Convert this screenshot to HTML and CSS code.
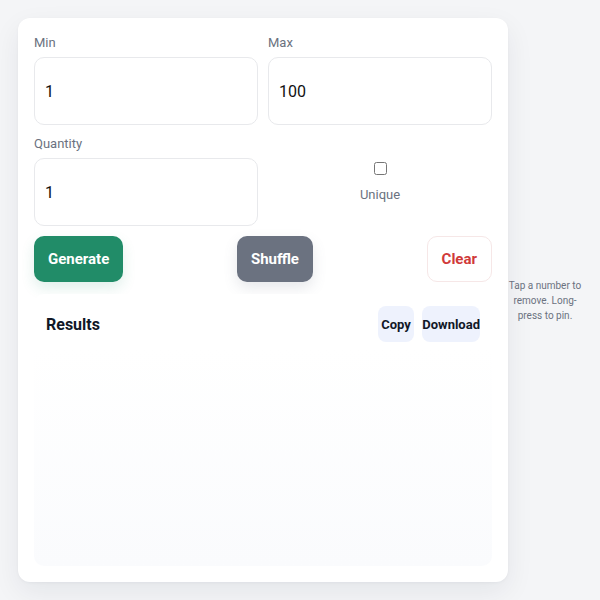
FILE: index.html
```html
<!DOCTYPE html>
<html lang="en">
<head>
<meta charset="utf-8">
<title>Random Number Generator</title>
<link rel="stylesheet" href="styles.css">
</head>
<body>
<main class="card">
  <div class="grid">
    <div class="field">
      <label class="label" for="min">Min</label>
      <input class="input" id="min" type="text" value="1">
    </div>
    <div class="field">
      <label class="label" for="max">Max</label>
      <input class="input" id="max" type="text" value="100">
    </div>
    <div class="field">
      <label class="label" for="qty">Quantity</label>
      <input class="input" id="qty" type="text" value="1">
    </div>
    <div class="unique">
      <input class="check" id="unique" type="checkbox">
      <label class="unique-label" for="unique">Unique</label>
    </div>
  </div>
  <div class="actions">
    <button class="btn btn-green">Generate</button>
    <button class="btn btn-gray">Shuffle</button>
    <button class="btn btn-clear">Clear</button>
  </div>
  <section class="results">
    <div class="results-head">
      <h2 class="results-title">Results</h2>
      <div class="tools">
        <button class="tool">Copy</button>
        <button class="tool tool-wide">Download</button>
      </div>
    </div>
  </section>
</main>
<p class="hint">Tap a number to remove. Long-press to pin.</p>
</body>
</html>
```

FILE: styles.css
```css
* { box-sizing: border-box; }
html, body { margin: 0; height: 100%; }
body {
  background: #f4f5f7;
  font-family: Roboto, "Liberation Sans", Arial, sans-serif;
  padding: 18px;
  display: flex;
  align-items: center;
}
.card {
  width: 490px;
  height: 564px;
  flex: none;
  background: #fff;
  border-radius: 12px;
  box-shadow: 0 10px 28px rgba(20, 30, 50, 0.07), 0 1px 3px rgba(20, 30, 50, 0.04);
  padding: 16px;
  display: flex;
  flex-direction: column;
}
.grid {
  display: grid;
  grid-template-columns: 1fr 1fr;
  gap: 10px;
}
.field { display: flex; flex-direction: column; }
.label {
  font-size: 13px;
  line-height: 17px;
  color: #6b7280;
  margin-bottom: 6px;
}
.input {
  height: 68px;
  border: 1px solid #e8e9ec;
  border-radius: 10px;
  padding: 0 10px;
  font-family: inherit;
  font-size: 16px;
  color: #111111;
  background: #fff;
  outline: none;
  width: 100%;
}
.unique {
  display: flex;
  flex-direction: column;
  align-items: center;
  justify-content: center;
  gap: 8px;
}
.check { margin: 3px; width: 13px; height: 13px; }
.unique-label {
  font-size: 13px;
  line-height: 17px;
  color: #6b7280;
}
.actions {
  display: flex;
  justify-content: space-between;
  margin-top: 10px;
}
.btn {
  height: 46px;
  padding: 0 13px;
  border-radius: 10px;
  border: 1px solid transparent;
  font-family: inherit;
  font-weight: 700;
  font-size: 15px;
  cursor: pointer;
}
.btn-green {
  background: #218c68;
  color: #fff;
  box-shadow: 0 6px 14px rgba(33, 140, 104, 0.14);
}
.btn-gray {
  background: #6b7280;
  color: #fff;
  box-shadow: 0 6px 14px rgba(107, 114, 128, 0.16);
}
.btn-clear {
  background: #fff;
  color: #d03a3a;
  border-color: #f6e7e7;
  padding: 0 14px;
}
.results {
  flex: 1;
  margin-top: 12px;
  padding: 12px;
  border-radius: 10px;
  background: linear-gradient(#ffffff 20%, #fafbfd 100%);
}
.results-head {
  display: flex;
  align-items: center;
  justify-content: space-between;
  height: 36px;
}
.results-title {
  margin: 0;
  font-size: 16px;
  font-weight: 700;
  color: #111827;
}
.tools { display: flex; gap: 8px; }
.tool {
  height: 36px;
  padding: 0 3.5px;
  border: none;
  border-radius: 8px;
  background: #eef2fd;
  color: #111827;
  font-family: inherit;
  font-weight: 700;
  font-size: 13px;
}
.tool-wide { padding: 0; }
.hint {
  flex: 1;
  margin: 0;
  text-align: center;
  font-size: 10px;
  line-height: 15px;
  color: #6b7280;
}
```
